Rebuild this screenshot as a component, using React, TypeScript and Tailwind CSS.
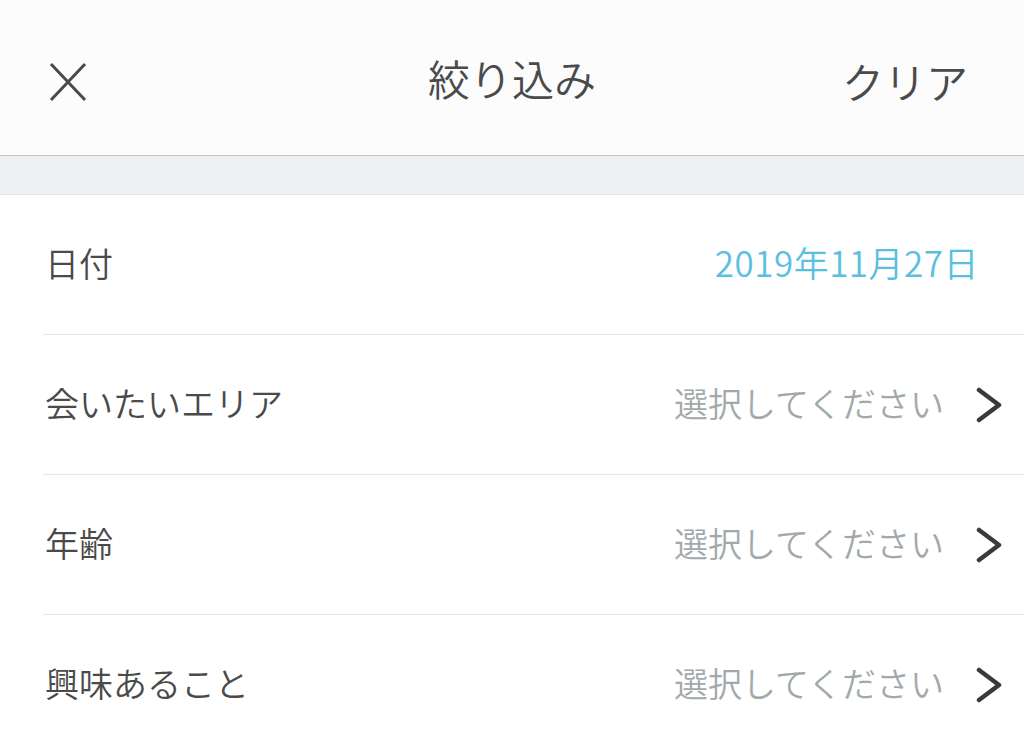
const font = { fontFamily: '"Noto Sans CJK JP", "Noto Sans", sans-serif' };

const rows = [
	{ label: "会いたいエリア" },
	{ label: "年齢" },
	{ label: "興味あること" },
];

function Row({ label, children }: { label: string; children: React.ReactNode }) {
	return (
		<div className="pl-[43px]">
			<div className="h-[140px] border-b border-[#e6e6e6] flex items-center justify-between pr-[22px]">
				<span className="pl-[2px] -mt-[4px] text-[34px] font-[350] text-[#4a4a4a]">{label}</span>
				{children}
			</div>
		</div>
	);
}

export default function App() {
	return (
		<div className="w-[1024px] h-[732px] overflow-hidden bg-white" style={font}>
			{/* Header */}
			<header className="h-[156px] bg-[#fcfcfc] border-b border-[#c6c6c6] flex items-center justify-between px-[48px] relative">
				<svg width="40" height="42" viewBox="0 0 40 42" className="text-[#4a4a4a] mt-[8px]">
					<path d="M3 3 L37 39 M37 3 L3 39" stroke="currentColor" strokeWidth="3" fill="none" />
				</svg>
				<h1 className="absolute left-1/2 -translate-x-1/2 text-[42px] font-[350] text-[#4a4a4a]">
					絞り込み
				</h1>
				<button className="text-[42px] font-[350] text-[#4a4a4a] mr-[8px] mt-[6px]">クリア</button>
			</header>
			{/* Spacer band */}
			<div className="h-[39px] bg-[#eff0f2] border-b border-[#e4e4e4]" />
			{/* Rows */}
			<Row label="日付">
				<span className="-mt-[4px] text-[35px] font-[350] tracking-[0.5px] text-[#5bbfdf] pr-[23px]">2019年11月27日</span>
			</Row>
			{rows.map((r) => (
				<Row key={r.label} label={r.label}>
					<div className="flex items-center gap-[30px]">
						<span className="-mt-[4px] text-[34px] font-[350] text-[#a3a9ab]">選択してください</span>
						<svg width="28" height="36" viewBox="0 0 28 36" className="text-[#3a3a3a]">
							<path d="M5 3 L25 18 L5 33" stroke="currentColor" strokeWidth="4.5" strokeLinecap="round" strokeLinejoin="round" fill="none" />
						</svg>
					</div>
				</Row>
			))}
		</div>
	);
}
